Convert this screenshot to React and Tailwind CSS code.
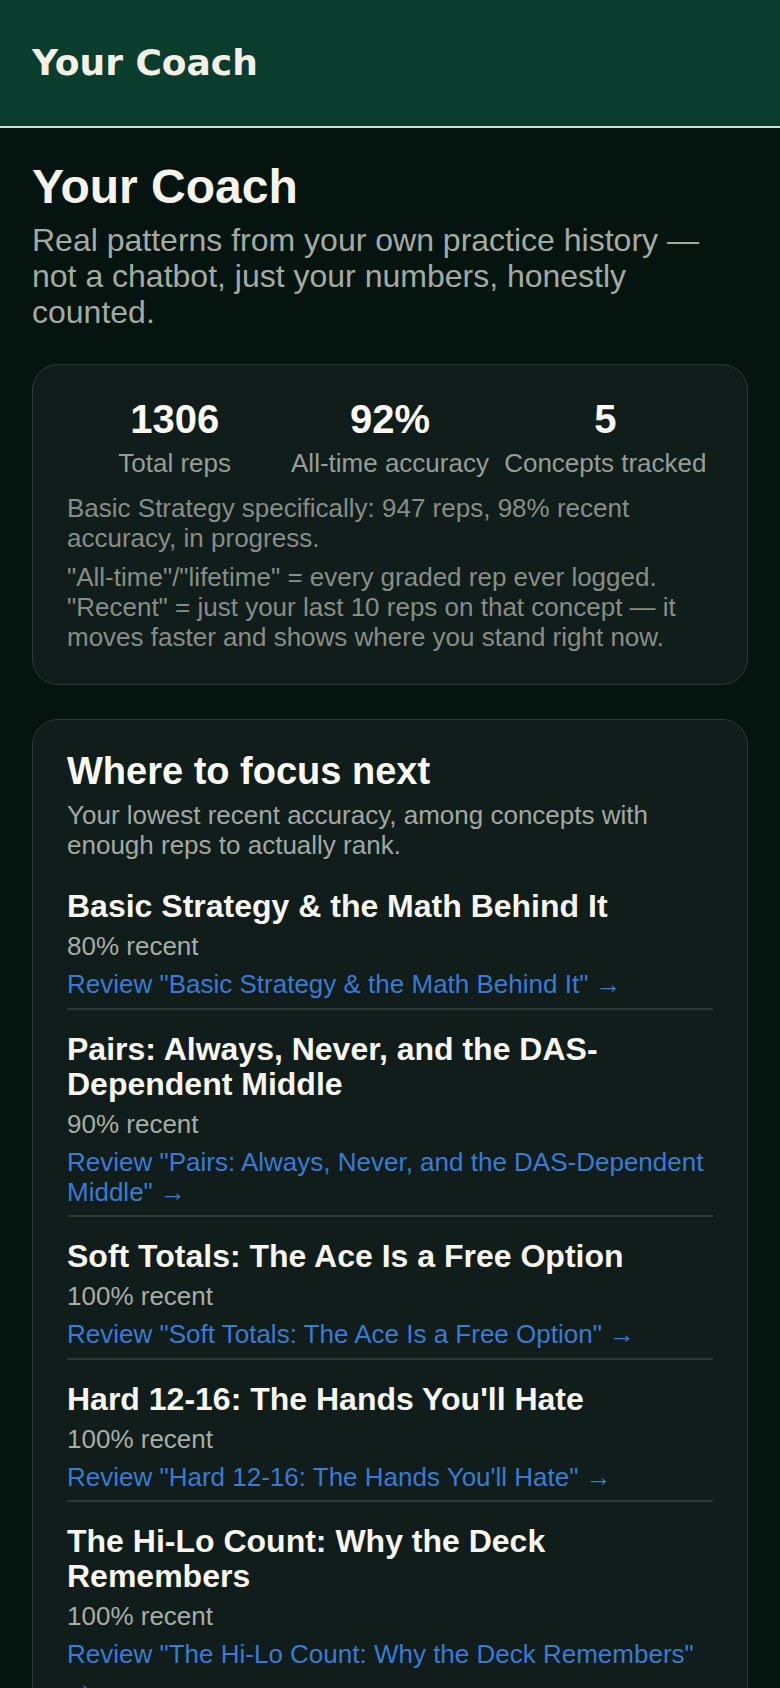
import React from "react";

const stats = [
  { value: "1306", label: "Total reps" },
  { value: "92%", label: "All-time accuracy" },
  { value: "5", label: "Concepts tracked" },
];

const focusItems = [
  { title: "Basic Strategy & the Math Behind It", recent: 80 },
  { title: "Pairs: Always, Never, and the DAS-Dependent Middle", recent: 90 },
  { title: "Soft Totals: The Ace Is a Free Option", recent: 100 },
  { title: "Hard 12-16: The Hands You'll Hate", recent: 100 },
  { title: "The Hi-Lo Count: Why the Deck Remembers", recent: 100 },
];

const StatsCard = () => (
  <div className="mt-[34px] rounded-[26px] border border-[#2c3934] bg-[#111d1a] px-[34px] pt-[31px] pb-[32px]">
    <div className="grid grid-cols-3 text-center">
      {stats.map((s) => (
        <div key={s.label}>
          <div className="text-[40px] leading-[46px] font-bold text-[#fbfaf5]">{s.value}</div>
          <div className="mt-[6px] text-[26px] leading-[30px] text-[#969d98]">{s.label}</div>
        </div>
      ))}
    </div>
    <p className="mt-[15px] text-[26px] leading-[30px] text-[#878e89]">
      Basic Strategy specifically: 947 reps, 98% recent accuracy, in progress.
    </p>
    <p className="mt-[9px] text-[26px] leading-[30px] text-[#878e89]">
      "All-time"/"lifetime" = every graded rep ever logged. "Recent" = just your last 10 reps on that concept — it moves faster and shows where you stand right now.
    </p>
  </div>
);

const FocusCard = () => (
  <div className="mt-[34px] rounded-[26px] border border-[#2c3934] bg-[#111d1a] px-[34px] pt-[29px] pb-[30px]">
    <h2 className="text-[38px] leading-[44px] font-bold text-[#fbfaf5]">Where to focus next</h2>
    <p className="mt-[7px] text-[26px] leading-[30px] text-[#a2a8a4]">
      Your lowest recent accuracy, among concepts with enough reps to actually rank.
    </p>
    <ul className="mt-[7px]">
      {focusItems.map((item, i) => (
        <li
          key={item.title}
          className={
            i < focusItems.length - 1
              ? "pt-[22px] pb-[8.5px] border-b-2 border-[#2c3833]"
              : "pt-[22px] pb-[8.5px]"
          }
        >
          <div className="text-[32px] leading-[35px] font-bold text-[#f8f6f0]">{item.title}</div>
          <div className="mt-[7px] text-[26px] leading-[30px] text-[#a7ada9]">{item.recent}% recent</div>
          <a href="#" className="mt-[8px] block text-[26px] leading-[30px] text-[#3a7bd5]">
            Review "{item.title}" <span className="leading-[20px]">→</span>
          </a>
        </li>
      ))}
    </ul>
  </div>
);

export default function App() {
  return (
    <div className="min-h-screen bg-[#05140f] font-['Liberation_Sans',Arial,sans-serif]">
      <header className="flex h-[128px] items-center border-b-2 border-[#d5dad2] bg-[#0b3d2f] px-[32px]">
        <div className="font-['DejaVu_Sans',sans-serif] text-[36px] leading-[42px] font-bold text-[#f4f0e5]">Your Coach</div>
      </header>
      <main className="px-[32px] pt-[31px] pb-[40px]">
        <h1 className="text-[48px] leading-[55px] font-bold text-[#f6f3eb]">Your Coach</h1>
        <p className="mt-[8px] text-[32px] leading-[36px] text-[#a3aba5]">
          Real patterns from your own practice history — not a chatbot, just your numbers, honestly counted.
        </p>
        <StatsCard />
        <FocusCard />
      </main>
    </div>
  );
}
